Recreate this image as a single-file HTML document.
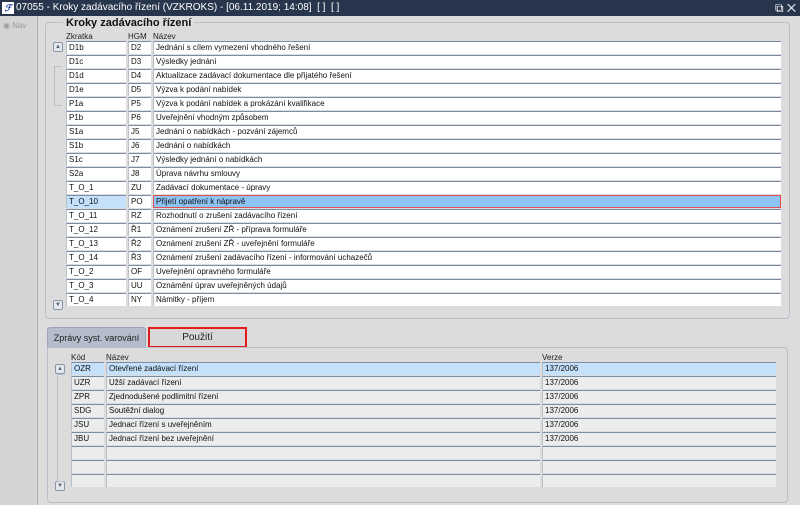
<!DOCTYPE html><html><head><meta charset="utf-8"><style>
*{margin:0;padding:0;box-sizing:border-box}
body{width:800px;height:505px;overflow:hidden;background:#dcdcdc;font-family:"Liberation Sans",sans-serif;font-size:8px;color:#111;position:relative}
.a{position:absolute}
.tb{left:0;top:0;width:800px;height:16px;background:#27364d;color:#fff;font-size:10px;line-height:16px;padding-left:16px}
.cell{position:absolute;height:13px;background:#fff;border-top:1px solid #7d8ca6;border-left:1px solid #b8c0cc;line-height:12px;padding-left:2px;font-size:8px;white-space:nowrap;overflow:hidden}
.g .cell{background:#ececec}
.hd{position:absolute;font-size:8px;color:#222}
.sb{position:absolute;width:10px;height:10px;border:1px solid #8a96a8;border-radius:2px;background:#e4e8ee;font-size:6px;line-height:8px;text-align:center;color:#567}
</style></head><body>
<div class="a tb"><span class="a" style="left:2px;top:2px;width:12px;height:12px;background:#fff;color:#1a3c9a;font-size:9px;line-height:12px;font-weight:bold;font-style:italic;text-align:center">ℱ</span>07055 - Kroky zadávacího řízení (VZKROKS) - [06.11.2019; 14:08]&nbsp; [ ]&nbsp; [ ]<span class="a" style="right:4px;top:0;font-size:12px">⧉ ✕</span></div>
<div class="a" style="left:0;top:16px;width:38px;height:489px;background:#d4d4d4;border-right:1px solid #b0b0b0"></div>
<div class="a" style="left:3px;top:21px;color:#999;font-size:8px">◉ Nav</div>
<div class="a" style="left:45px;top:22px;width:745px;height:297px;border:1px solid #b8c0cc;border-radius:4px"></div>
<div class="a" style="left:63px;top:17px;background:#dcdcdc;padding:0 3px;font-size:11px;font-weight:bold;color:#111">Kroky zadávacího řízení</div>
<div class="hd" style="left:66px;top:32px">Zkratka</div><div class="hd" style="left:128px;top:32px">HGM</div><div class="hd" style="left:153px;top:32px">Název</div>
<div class="sb" style="left:53px;top:42px">▲</div><div class="sb" style="left:53px;top:300px">▼</div>
<div class="a" style="left:54px;top:66px;width:8px;height:40px;border:1px solid #b8c0cc;border-right:none"></div>
<div id="t1"></div>
<div class="a" style="left:47px;top:327px;width:99px;height:21px;background:#b5bccb;border:1px solid #9aa4b6;border-radius:3px 3px 0 0;font-size:9px;line-height:20px;text-align:center;color:#222">Zprávy syst. varování</div>
<div class="a" style="left:148px;top:327px;width:99px;height:21px;background:#d8d8d8;border:2px solid #e21b1b;font-size:10px;line-height:17px;text-align:center;color:#222">Použití</div>
<div class="a" style="left:47px;top:347px;width:741px;height:156px;border:1px solid #b8c0cc;border-radius:0 4px 4px 4px"></div>
<div class="hd" style="left:71px;top:353px">Kód</div><div class="hd" style="left:106px;top:353px">Název</div><div class="hd" style="left:542px;top:353px">Verze</div>
<div class="sb" style="left:55px;top:364px">▲</div><div class="sb" style="left:55px;top:481px">▼</div>
<div class="a" style="left:57px;top:374px;width:8px;height:108px;border:1px solid #b8c0cc;border-right:none"></div>
<div id="t2" class="g"></div>
<script>
var r1=[["D1b","D2","Jednání s cílem vymezení vhodného řešení"],["D1c","D3","Výsledky jednání"],["D1d","D4","Aktualizace zadávací dokumentace dle přijatého řešení"],["D1e","D5","Výzva k podání nabídek"],["P1a","P5","Výzva k podání nabídek a prokázání kvalifikace"],["P1b","P6","Uveřejnění vhodným způsobem"],["S1a","J5","Jednání o nabídkách - pozvání zájemců"],["S1b","J6","Jednání o nabídkách"],["S1c","J7","Výsledky jednání o nabídkách"],["S2a","J8","Úprava návrhu smlouvy"],["T_O_1","ZU","Zadávací dokumentace - úpravy"],["T_O_10","PO","Přijetí opatření k nápravě"],["T_O_11","RZ","Rozhodnutí o zrušení zadávacího řízení"],["T_O_12","Ř1","Oznámení zrušení ZŘ - příprava formuláře"],["T_O_13","Ř2","Oznámení zrušení ZŘ - uveřejnění formuláře"],["T_O_14","Ř3","Oznámení zrušení zadávacího řízení - informování uchazečů"],["T_O_2","OF","Uveřejnění opravného formuláře"],["T_O_3","UU","Oznámění úprav uveřejněných údajů"],["T_O_4","NY","Námitky - příjem"]];
var h="";r1.forEach(function(r,i){var y=41+i*14;var s=i==11;
h+='<div class="cell" style="left:66px;top:'+y+'px;width:60px;'+(s?'background:#c4e0fa':'')+'">'+r[0]+'</div>';
h+='<div class="cell" style="left:128px;top:'+y+'px;width:23px">'+r[1]+'</div>';
h+='<div class="cell" style="left:153px;top:'+y+'px;width:628px;'+(s?'background:#8ec4f5;border:1px solid #e05050':'')+'">'+r[2]+'</div>';});
document.getElementById("t1").innerHTML=h;
var r2=[["OZR","Otevřené zadávací řízení"],["UZR","Užší zadávací řízení"],["ZPR","Zjednodušené podlimitní řízení"],["SDG","Soutěžní dialog"],["JSU","Jednací řízení s uveřejněním"],["JBU","Jednací řízení bez uveřejnění"],["",""],["",""],["",""]];
h="";r2.forEach(function(r,i){var y=362+i*14;var s=i==0?'background:#c4e0fa':'';
h+='<div class="cell" style="left:71px;top:'+y+'px;width:33px;'+s+'">'+r[0]+'</div>';
h+='<div class="cell" style="left:106px;top:'+y+'px;width:434px;'+s+'">'+r[1]+'</div>';
h+='<div class="cell" style="left:542px;top:'+y+'px;width:234px;'+s+'">'+(r[0]?'137/2006':'')+'</div>';});
document.getElementById("t2").innerHTML=h;
</script>
</body></html>
